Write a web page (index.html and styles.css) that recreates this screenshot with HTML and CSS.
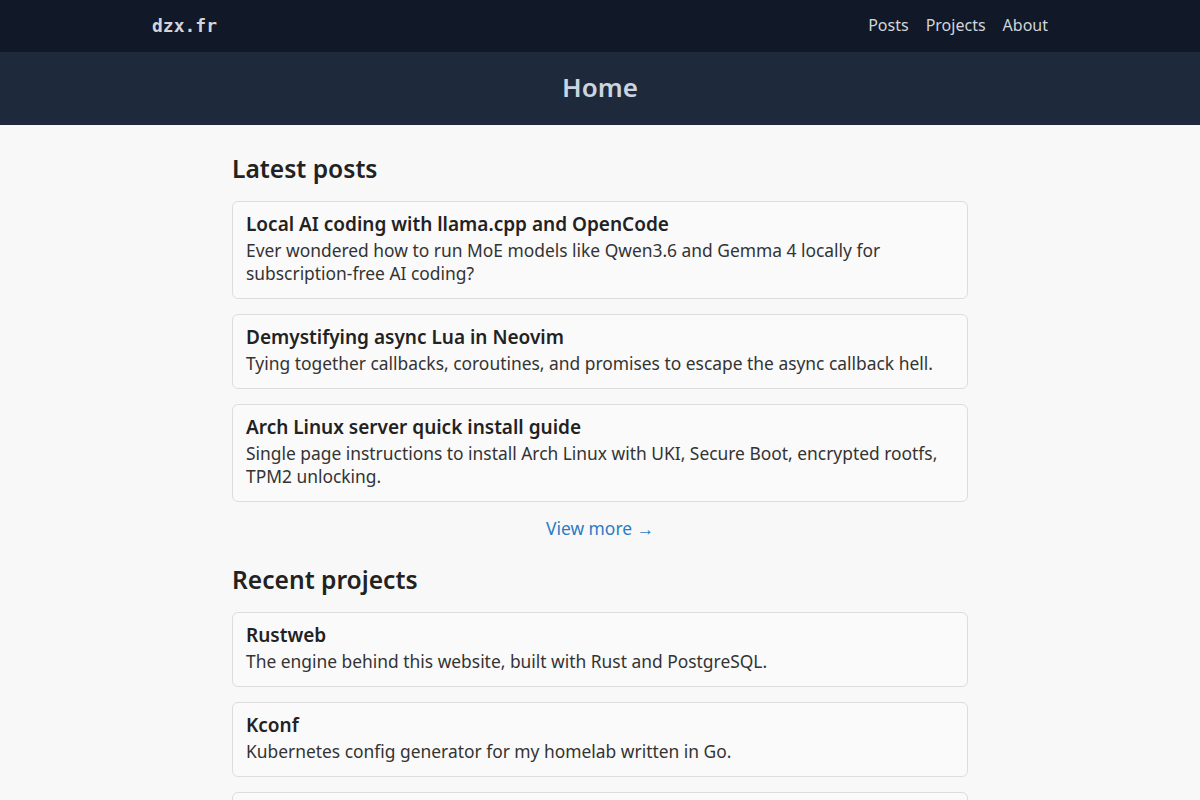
FILE: index.html
```html
<!DOCTYPE html>
<html lang="en">
<head>
    <meta charset="UTF-8">
    <meta name="viewport" content="width=device-width, initial-scale=1.0">
    <title>dzx.fr</title>
    <link rel="stylesheet" href="styles.css">
</head>
<body>

    <nav class="topbar">
        <div class="topbar-inner">
            <a class="logo" href="#">dzx.fr</a>
            <div class="menu">
                <a href="#">Posts</a>
                <a href="#">Projects</a>
                <a href="#">About</a>
            </div>
        </div>
    </nav>

    <header class="hero">
        <h1>Home</h1>
    </header>

    <main class="content">
        <h2>Latest posts</h2>
        <div class="list">
            <a class="card" href="#">
                <h3>Local AI coding with llama.cpp and OpenCode</h3>
                <p>Ever wondered how to run MoE models like Qwen3.6 and Gemma 4 locally for subscription-free AI coding?</p>
            </a>
            <a class="card" href="#">
                <h3>Demystifying async Lua in Neovim</h3>
                <p>Tying together callbacks, coroutines, and promises to escape the async callback hell.</p>
            </a>
            <a class="card" href="#">
                <h3>Arch Linux server quick install guide</h3>
                <p>Single page instructions to install Arch Linux with UKI, Secure Boot, encrypted rootfs, TPM2 unlocking.</p>
            </a>
        </div>
        <div class="more"><a href="#">View more →</a></div>

        <h2 class="second">Recent projects</h2>
        <div class="list">
            <a class="card" href="#">
                <h3>Rustweb</h3>
                <p>The engine behind this website, built with Rust and PostgreSQL.</p>
            </a>
            <a class="card" href="#">
                <h3>Kconf</h3>
                <p>Kubernetes config generator for my homelab written in Go.</p>
            </a>
            <a class="card" href="#">
                <h3>Dotfiles</h3>
                <p>My personal configuration files.</p>
            </a>
        </div>
    </main>

</body>
</html>
```

FILE: styles.css
```css
body {
    margin: 0;
    font-family: "Noto Sans", sans-serif;
    background-color: #f8f8f8;
    color: #222;
}
a {
    text-decoration: none;
    color: inherit;
}
.topbar {
    background-color: #111827;
    height: 52px;
}
.topbar-inner {
    max-width: 896px;
    margin: 0 auto;
    height: 100%;
    display: flex;
    align-items: center;
    justify-content: space-between;
}
.logo {
    font-family: "DejaVu Sans Mono", monospace;
    font-weight: bold;
    font-size: 18px;
    color: #d1d5db;
    margin-bottom: 2px;
}
.menu {
    display: flex;
    gap: 17px;
    margin-bottom: 2px;
}
.menu a {
    color: #d1d5db;
    font-size: 16px;
}
.hero {
    background-color: #1e293b;
    height: 73px;
    display: flex;
    align-items: center;
    justify-content: center;
}
.hero h1 {
    margin: 0 0 3px;
    font-size: 26px;
    font-weight: 600;
    color: #cbd5e1;
}
.content {
    max-width: 736px;
    margin: 0 auto;
    padding-top: 25px;
}
h2 {
    margin: 0 0 13px;
    font-size: 24.6px;
    font-weight: 600;
    line-height: 38px;
}
.list {
    display: flex;
    flex-direction: column;
    gap: 15px;
}
.card {
    display: block;
    border: 1px solid #dddddd;
    border-radius: 6px;
    padding: 9px 13px 13px;
    background-color: #fafafa;
}
.card h3 {
    margin: 0;
    font-size: 19px;
    font-weight: 600;
    line-height: 26px;
    color: #222;
}
.card p {
    margin: 2px 0 0;
    font-size: 17.4px;
    line-height: 23px;
    color: #333;
}
.more {
    text-align: center;
    margin: 14px 0 21px;
}
.more a {
    color: #2b7bc4;
    font-size: 17.4px;
    line-height: 24px;
}
```
